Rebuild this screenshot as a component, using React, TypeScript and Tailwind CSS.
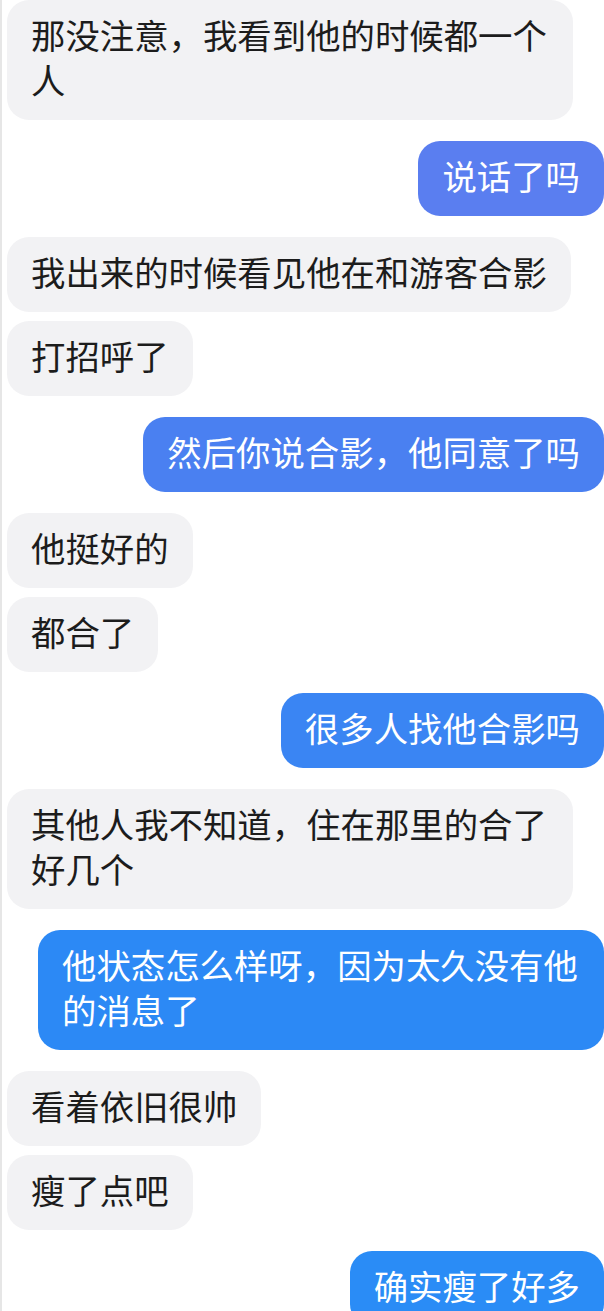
import React from 'react';

type Msg = { text: string; me: boolean; color?: string; gap: 'first' | 'near' | 'far' };

const messages: Msg[] = [
  { text: '那没注意，我看到他的时候都一个人', me: false, gap: 'first' },
  { text: '说话了吗', me: true, color: 'bg-[#5a7ef0]', gap: 'far' },
  { text: '我出来的时候看见他在和游客合影', me: false, gap: 'far' },
  { text: '打招呼了', me: false, gap: 'near' },
  { text: '然后你说合影，他同意了吗', me: true, color: 'bg-[#4a80f1]', gap: 'far' },
  { text: '他挺好的', me: false, gap: 'far' },
  { text: '都合了', me: false, gap: 'near' },
  { text: '很多人找他合影吗', me: true, color: 'bg-[#3a85f3]', gap: 'far' },
  { text: '其他人我不知道，住在那里的合了好几个', me: false, gap: 'far' },
  { text: '他状态怎么样呀，因为太久没有他的消息了', me: true, color: 'bg-[#2c89f5]', gap: 'far' },
  { text: '看着依旧很帅', me: false, gap: 'far' },
  { text: '瘦了点吧', me: false, gap: 'near' },
  { text: '确实瘦了好多', me: true, color: 'bg-[#2a8cf6]', gap: 'far' },
];

const App = () => {
  return (
    <div
      className="w-[604px] h-[1311px] overflow-hidden bg-white border-l-2 border-[#e6e6e6]"
      style={{ fontFamily: '"Noto Sans CJK SC", "Noto Sans", sans-serif' }}
    >
      <div className="flex flex-col pl-[5px]">
        {messages.map((m, i) => (
          <div
            key={i}
            className={`flex ${m.me ? 'justify-end' : 'justify-start'} ${
              m.gap === 'first' ? 'mt-0' : m.gap === 'near' ? 'mt-[9px]' : 'mt-[21px]'
            }`}
          >
            <div
              className={`max-w-[566px] rounded-[22px] px-[24px] pt-[12px] pb-[18px] text-[34.4px] leading-[45px] ${
                m.me ? `${m.color} text-white` : 'bg-[#f2f2f4] text-[#1c1c1c]'
              }`}
            >
              {m.text}
            </div>
          </div>
        ))}
      </div>
    </div>
  );
};

export default App;
